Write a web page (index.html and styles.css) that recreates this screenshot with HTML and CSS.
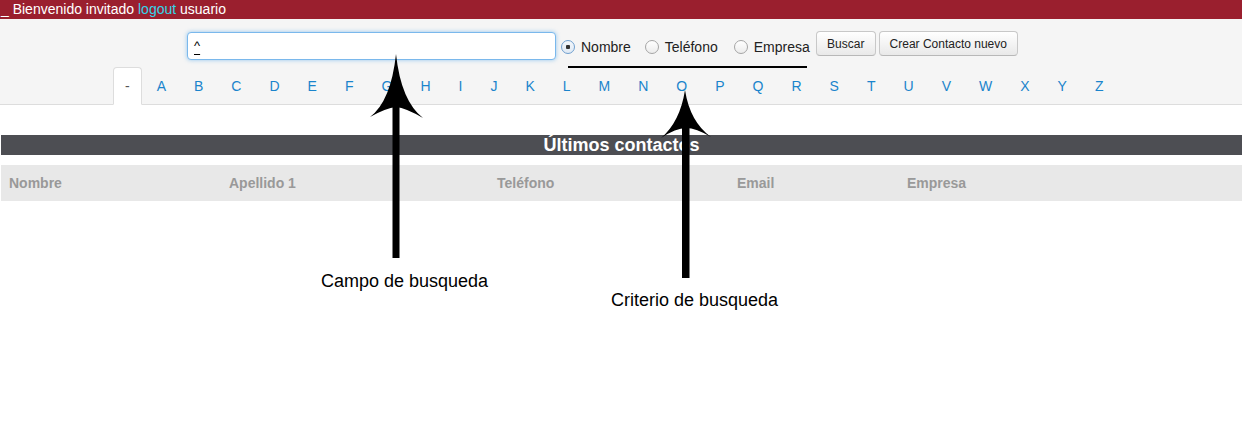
FILE: index.html
```html
<!DOCTYPE html>
<html lang="es">
<head>
<meta charset="utf-8">
<title>Contactos</title>
<link rel="stylesheet" href="styles.css">
</head>
<body>
<div class="page">
  <div class="topbar">_ Bienvenido invitado <a class="logout" href="#">logout</a> usuario</div>
  <div class="header">
    <form class="search-row">
      <div class="search-input"><span class="caret">^</span></div>
      <label class="opt"><input type="radio" name="crit" checked><span>Nombre</span></label>
      <label class="opt"><input type="radio" name="crit"><span>Teléfono</span></label>
      <label class="opt"><input type="radio" name="crit"><span>Empresa</span></label>
      <button type="button" class="btn btn-buscar">Buscar</button>
      <button type="button" class="btn btn-wide">Crear Contacto nuevo</button>
    </form>
    <ul class="tabs">
      <li class="active"><a href="#">-</a></li>
      <li><a href="#">A</a></li><li><a href="#">B</a></li><li><a href="#">C</a></li>
      <li><a href="#">D</a></li><li><a href="#">E</a></li><li><a href="#">F</a></li>
      <li><a href="#">G</a></li><li><a href="#">H</a></li><li><a href="#">I</a></li>
      <li><a href="#">J</a></li><li><a href="#">K</a></li><li><a href="#">L</a></li>
      <li><a href="#">M</a></li><li><a href="#">N</a></li><li><a href="#">O</a></li>
      <li><a href="#">P</a></li><li><a href="#">Q</a></li><li><a href="#">R</a></li>
      <li><a href="#">S</a></li><li><a href="#">T</a></li><li><a href="#">U</a></li>
      <li><a href="#">V</a></li><li><a href="#">W</a></li><li><a href="#">X</a></li>
      <li><a href="#">Y</a></li><li><a href="#">Z</a></li>
    </ul>
  </div>
  <div class="content">
    <div class="section-title">Últimos contactos</div>
    <div class="thead">
      <div class="th">Nombre</div>
      <div class="th">Apellido 1</div>
      <div class="th">Teléfono</div>
      <div class="th">Email</div>
      <div class="th">Empresa</div>
    </div>
  </div>

  <svg class="annot" width="1242" height="442" viewBox="0 0 1242 442" aria-hidden="true">
    <rect x="568" y="66" width="239" height="2" fill="#000"/>
    <rect x="392.5" y="104" width="7" height="154" fill="#000"/>
    <path d="M396 54 Q401 101 423 118 Q406 108 396 107 Q386 108 370 117 Q391 101 396 54 Z" fill="#000"/>
    <rect x="682" y="126" width="7.5" height="152" fill="#000"/>
    <path d="M685 90 Q690 122 711 137 Q696 128 686 128 Q676 128 661 138 Q680 122 685 90 Z" fill="#000"/>
  </svg>
  <div class="note note-campo">Campo de busqueda</div>
  <div class="note note-criterio">Criterio de busqueda</div>
</div>
</body>
</html>
```

FILE: styles.css
```css
* { box-sizing: border-box; }
html, body { margin: 0; padding: 0; background: #fff; }
body { font-family: "Liberation Sans", Arial, sans-serif; color: #333; }
.page { position: relative; width: 1242px; height: 442px; overflow: hidden; }

.topbar {
  height: 19px;
  background: #9a1f2e;
  color: #fff;
  font-size: 14px;
  line-height: 19px;
  padding-left: 1px;
  white-space: nowrap;
}
.logout { color: #33d6ea; text-decoration: none; }

.header {
  background: #f5f5f5;
  border-bottom: 1px solid #ddd;
  padding-top: 13px;
}
.search-row {
  display: flex;
  align-items: flex-start;
  height: 28px;
  margin: 0;
  padding-left: 187px;
}
.search-input {
  width: 369px;
  height: 28px;
  background: #fff;
  border: 1px solid #7ab8ec;
  border-radius: 4px;
  box-shadow: 0 0 4px rgba(82, 168, 236, 0.6);
  padding: 6px 0 0 6px;
  font-size: 13px;
  line-height: 14px;
  color: #000;
}
.caret { text-decoration: underline; text-underline-offset: 4px; }

.opt {
  display: flex;
  align-items: center;
  height: 28px;
  margin-top: 1px;
  font-size: 14px;
  color: #222;
  margin-left: 5px;
  margin-right: 8px;
  white-space: nowrap;
}
.opt + .opt { margin-left: 6px; }
.opt:nth-of-type(3) { margin-left: 8px; margin-right: 0; }
.opt input {
  appearance: none;
  -webkit-appearance: none;
  width: 14px;
  height: 14px;
  margin: 0 6px 0 0;
  border-radius: 50%;
  border: 1px solid #a5a5a5;
  background: linear-gradient(#ffffff, #ececec);
  position: relative;
}
.opt input:checked {
  border-color: #6f9fcf;
  background: radial-gradient(circle, #333 0 2px, transparent 2.5px), linear-gradient(#f4f8fc, #dfe9f4);
}

.btn {
  height: 25px;
  margin-top: -1px;
  margin-left: 6px;
  padding: 0;
  font-family: "Liberation Sans", Arial, sans-serif;
  font-size: 12px;
  color: #222;
  white-space: nowrap;
  background: linear-gradient(#ffffff, #e9e9e9);
  border: 1px solid #c8c8c8;
  border-bottom-color: #b8b8b8;
  border-radius: 4px;
}
.btn-buscar { width: 60px; }
.btn-wide { margin-left: 3px; width: 139px; }

.tabs {
  list-style: none;
  display: flex;
  margin: 7px 0 -1px 0;
  padding: 0 0 0 113px;
}
.tabs li { margin-right: 2px; }
.tabs a {
  display: block;
  padding: 8px 12px;
  line-height: 20px;
  font-size: 14px;
  color: #1a84cc;
  text-decoration: none;
  border: 1px solid transparent;
  border-radius: 4px 4px 0 0;
}
.tabs .active a {
  background: #fff;
  color: #555;
  border-color: #ddd #ddd transparent;
  padding: 8px 11px;
}

.content { padding: 30px 0 0 1px; }
.section-title {
  height: 20px;
  background: #4d4e53;
  color: #fff;
  font-weight: bold;
  font-size: 18px;
  line-height: 20px;
  text-align: center;
}
.thead {
  margin-top: 10px;
  height: 36px;
  background: #e8e8e8;
  display: grid;
  grid-template-columns: 220px 268px 240px 170px 1fr;
  align-items: center;
}
.th {
  padding-left: 8px;
  font-size: 14px;
  font-weight: bold;
  color: #999;
}

.annot { position: absolute; left: 0; top: 0; pointer-events: none; }
.note {
  position: absolute;
  font-size: 18px;
  line-height: 20px;
  color: #000;
  white-space: nowrap;
}
.note-campo { left: 321px; top: 271px; }
.note-criterio { left: 611px; top: 290px; }
```
